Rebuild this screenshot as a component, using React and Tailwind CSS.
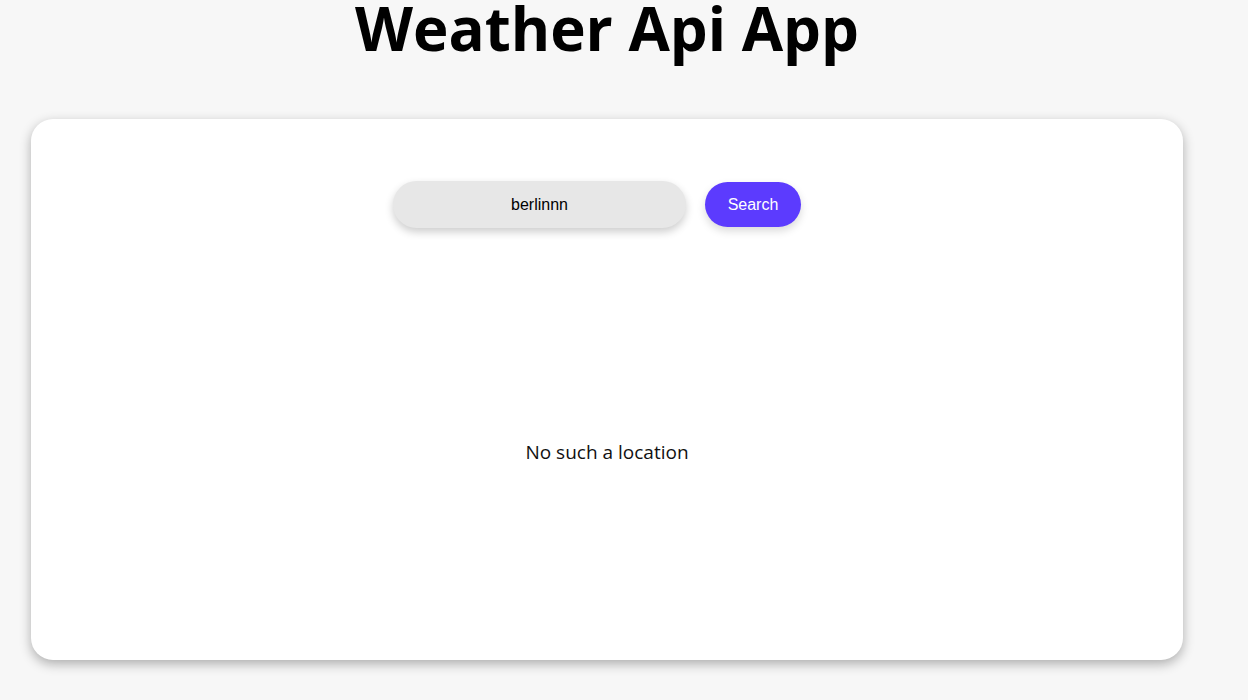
export default function App() {
    return (
        <div className="min-h-[700px] bg-[#f7f7f7] overflow-hidden">
            <div className="w-[1214px]">
                <h1 className="text-center text-[60px] font-bold leading-[56px] text-black" style={{ fontFamily: '"Open Sans", sans-serif' }}>
                    Weather Api App
                </h1>
                <div className="mx-[31px] mt-[63px] h-[541px] rounded-[22px] bg-white shadow-[0_4px_12px_rgba(0,0,0,0.3)] flex flex-col items-center">
                    <div className="flex items-center gap-[19px] mt-[62px] mr-[20px]">
                        <input
                            defaultValue="berlinnn"
                            className="w-[293px] h-[47px] rounded-full bg-[#e7e7e7] text-center text-[16px] text-black outline-none shadow-[0_4px_8px_rgba(0,0,0,0.2)]"
                            style={{ fontFamily: '"Liberation Sans", Arial, sans-serif' }}
                        />
                        <button
                            className="w-[96px] h-[45px] rounded-full bg-[#5c3bfe] text-white text-[16px] shadow-[0_4px_8px_rgba(0,0,0,0.15)]"
                            style={{ fontFamily: '"Liberation Sans", Arial, sans-serif' }}
                        >
                            Search
                        </button>
                    </div>
                    <p className="mt-[210px] text-[19px] text-[#111]" style={{ fontFamily: '"Open Sans", sans-serif' }}>
                        No such a location
                    </p>
                </div>
            </div>
        </div>
    );
}
